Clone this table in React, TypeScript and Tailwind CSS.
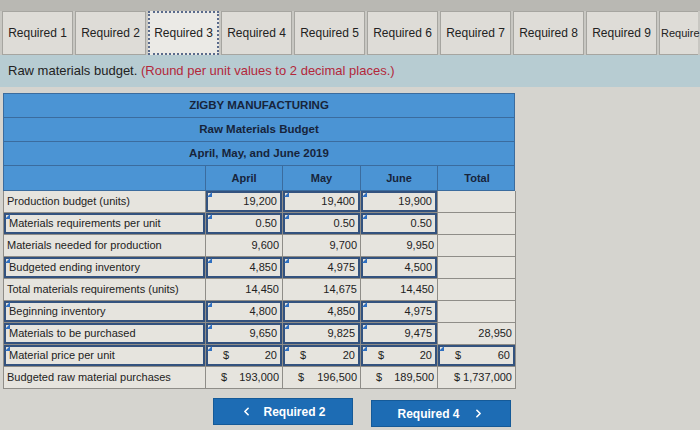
import { ChevronLeft, ChevronRight } from 'lucide-react'

type Cell = { v: string; input?: boolean; dollar?: boolean }
type Row = { label: string; labelInput?: boolean; cells: Cell[] }

const tabs = ['Required 1', 'Required 2', 'Required 3', 'Required 4', 'Required 5', 'Required 6', 'Required 7', 'Required 8', 'Required 9']

const rows: Row[] = [
  { label: 'Production budget (units)', cells: [{ v: '19,200', input: true }, { v: '19,400', input: true }, { v: '19,900', input: true }, { v: '' }] },
  { label: 'Materials requirements per unit', labelInput: true, cells: [{ v: '0.50', input: true }, { v: '0.50', input: true }, { v: '0.50', input: true }, { v: '' }] },
  { label: 'Materials needed for production', cells: [{ v: '9,600' }, { v: '9,700' }, { v: '9,950' }, { v: '' }] },
  { label: 'Budgeted ending inventory', labelInput: true, cells: [{ v: '4,850', input: true }, { v: '4,975', input: true }, { v: '4,500', input: true }, { v: '' }] },
  { label: 'Total materials requirements (units)', cells: [{ v: '14,450' }, { v: '14,675' }, { v: '14,450' }, { v: '' }] },
  { label: 'Beginning inventory', labelInput: true, cells: [{ v: '4,800', input: true }, { v: '4,850', input: true }, { v: '4,975', input: true }, { v: '' }] },
  { label: 'Materials to be purchased', labelInput: true, cells: [{ v: '9,650', input: true }, { v: '9,825', input: true }, { v: '9,475', input: true }, { v: '28,950' }] },
  { label: 'Material price per unit', labelInput: true, cells: [{ v: '20', input: true, dollar: true }, { v: '20', input: true, dollar: true }, { v: '20', input: true, dollar: true }, { v: '60', input: true, dollar: true }] },
  { label: 'Budgeted raw material purchases', cells: [{ v: '193,000', dollar: true }, { v: '196,500', dollar: true }, { v: '189,500', dollar: true }, { v: '$ 1,737,000' }] },
]

const widths = ['w-[77px]', 'w-[78px]', 'w-[77px]', 'w-[78px]']

function Marker() {
  return <span className="absolute left-[1px] top-[1px] h-0 w-0 border-l-[5px] border-t-[5px] border-l-transparent border-t-[#2f6fc0] rotate-90" />
}

function ValueCell({ c, w }: { c: Cell; w: string }) {
  return (
    <div className={`${w} relative h-[22px] shrink-0 border-b border-r border-[#8f8d88] p-0`}>
      <div
        className={`flex h-full items-center justify-between px-[3px] ${
          c.input ? 'border-2 border-[#33527e]' : ''
        }`}
      >
        <span className="pl-[12px]">{c.dollar ? '$' : ''}</span>
        <span>{c.v}</span>
      </div>
      {c.input && <Marker />}
    </div>
  )
}

export default function App() {
  return (
    <div className="h-[430px] w-[700px] overflow-hidden bg-[#d5d4cf] font-['Liberation_Sans',Arial,sans-serif] text-[#222]">
      <div className="h-[11px] bg-[#b9b8b3]" />
      <div className="flex h-[44px] gap-[2px] bg-[#c8c7c2] px-[2px]">
        {tabs.map((t, i) => (
          <div
            key={t}
            className={`flex w-[71px] shrink-0 items-center justify-center text-[12px] ${
              i === 2
                ? 'border-2 border-dotted border-[#5a6b8c] bg-[#ebeae6]'
                : 'border border-[#a6a5a0] bg-[#dedcd7]'
            }`}
          >
            <span className="whitespace-nowrap">{t}</span>
          </div>
        ))}
        <div className="flex min-w-0 flex-1 items-center border border-r-0 border-[#a6a5a0] bg-[#dedcd7] pl-[1px] text-[11px]">
          <span className="whitespace-nowrap">Require</span>
        </div>
      </div>
      <div className="flex h-[32px] items-center bg-[#b7ccd2] pl-[8px] text-[13px]">
        <span>Raw materials budget.&nbsp;</span>
        <span className="text-[#b3283b]">(Round per unit values to 2 decimal places.)</span>
      </div>

      <div className="ml-[3px] mt-[6px] w-[512px] text-[11px]">
        <div className="border border-[#3b6c9e] bg-[#4b94d4] font-bold text-[#17243b]">
          {['ZIGBY MANUFACTURING', 'Raw Materials Budget', 'April, May, and June 2019'].map((h) => (
            <div key={h} className="flex h-[24px] items-center justify-center border-b border-[#3b6c9e] text-[11.5px]">
              {h}
            </div>
          ))}
          <div className="flex h-[24px]">
            <div className="w-[202px] shrink-0 border-r border-[#3b6c9e]" />
            {['April', 'May', 'June', 'Total'].map((m, i) => (
              <div key={m} className={`${widths[i]} flex shrink-0 items-center justify-center border-r border-[#3b6c9e] last:border-r-0`}>
                {m}
              </div>
            ))}
          </div>
        </div>
        <div className="border-l border-[#8f8d88] bg-[#e6e4de]">
          {rows.map((r) => (
            <div key={r.label} className="flex">
              <div className="relative h-[22px] w-[202px] shrink-0 border-b border-r border-[#8f8d88]">
                <div className={`flex h-full items-center pl-[3px] ${r.labelInput ? 'border-2 border-[#33527e] pl-[2px]' : ''}`}>
                  {r.label}
                </div>
                {r.labelInput && <Marker />}
              </div>
              {r.cells.map((c, i) => (
                <ValueCell key={i} c={c} w={widths[i]} />
              ))}
            </div>
          ))}
        </div>
      </div>

      <div className="mt-[9px] flex gap-[18px] pl-[213px] text-[12px] font-bold text-white">
        <div className="flex h-[27px] w-[140px] items-center justify-center gap-[10px] border border-[#155a98] bg-[#1d6cb4]">
          <ChevronLeft className="h-[13px] w-[13px]" strokeWidth={3} />
          <span>Required 2</span>
        </div>
        <div className="mt-[2px] flex h-[27px] w-[140px] items-center justify-center gap-[12px] border border-[#155a98] bg-[#1d6cb4]">
          <span>Required 4</span>
          <ChevronRight className="h-[13px] w-[13px]" strokeWidth={3} />
        </div>
      </div>
    </div>
  )
}
